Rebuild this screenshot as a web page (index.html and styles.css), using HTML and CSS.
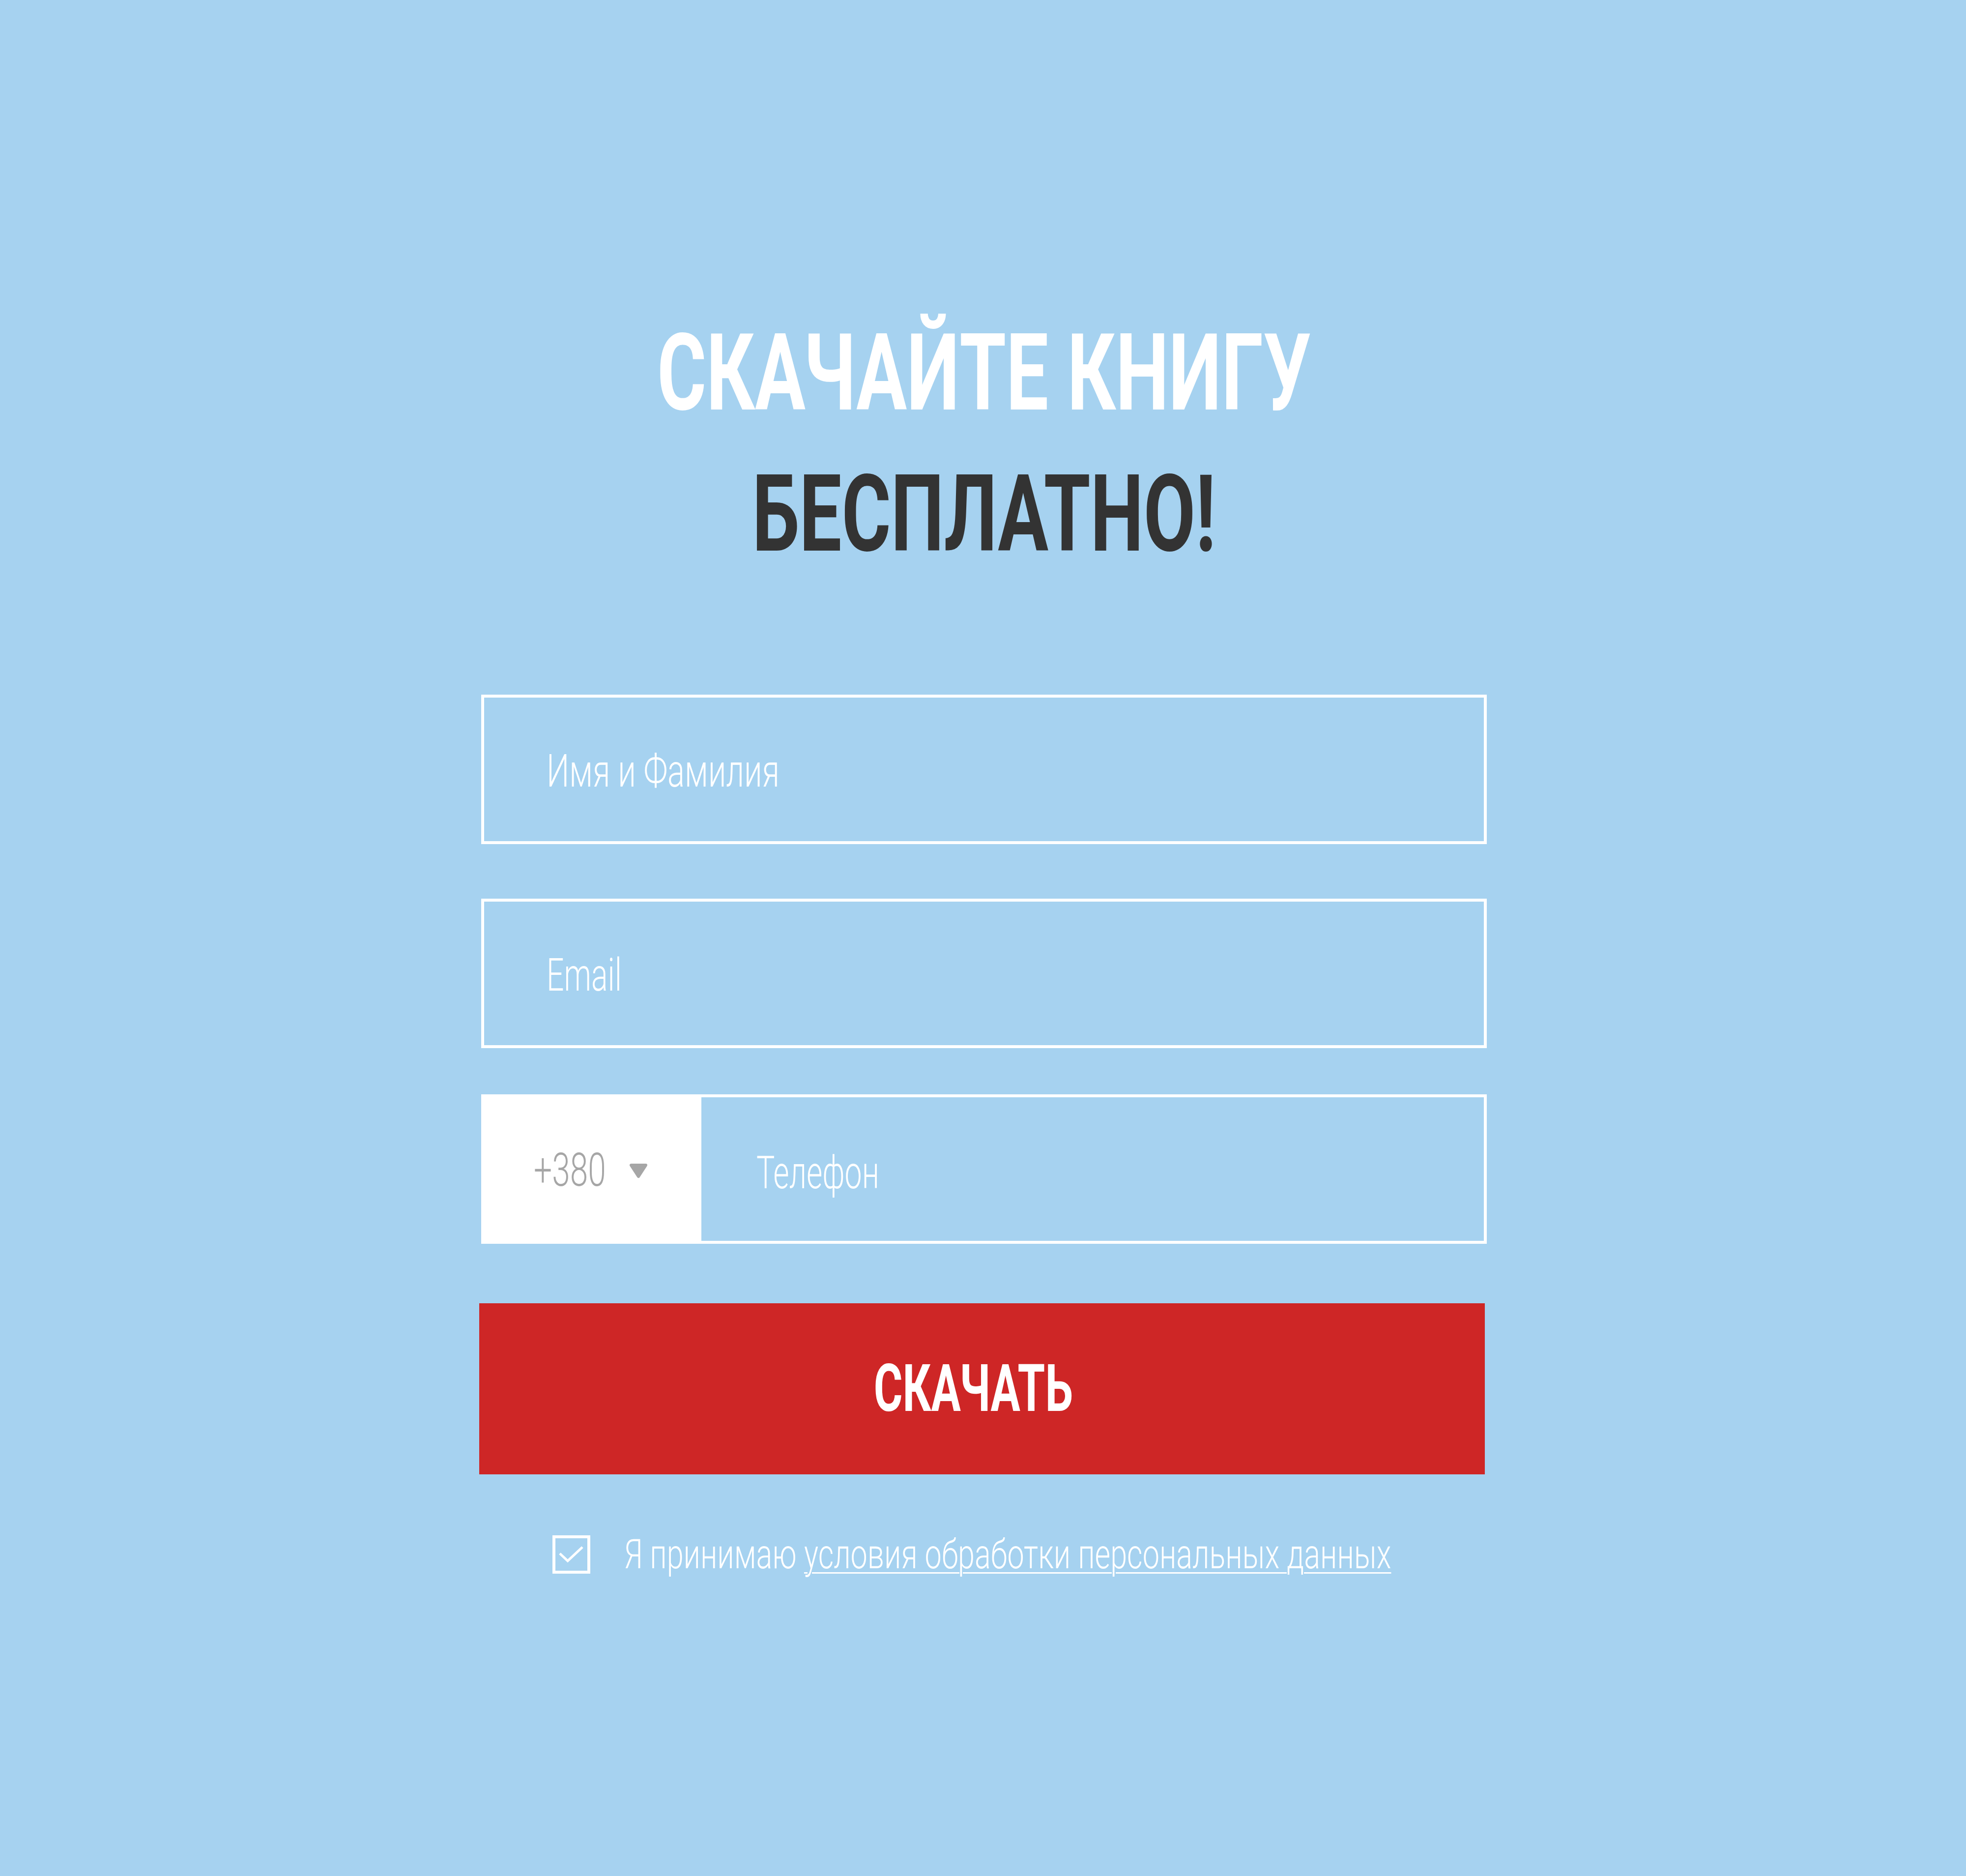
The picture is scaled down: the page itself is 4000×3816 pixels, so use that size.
FILE: index.html
```html
<!DOCTYPE html>
<html lang="ru">
<head>
<meta charset="utf-8">
<title>Скачайте книгу бесплатно</title>
<link rel="stylesheet" href="styles.css">
</head>
<body>
<main class="page">
  <h1 class="title">
    <span class="title-line title-white">СКАЧАЙТЕ КНИГУ</span>
    <span class="title-line title-dark">БЕСПЛАТНО!</span>
  </h1>
  <form class="form">
    <label class="field">
      <span class="ph ph-name">Имя и Фамилия</span>
    </label>
    <label class="field field-email">
      <span class="ph ph-email">Email</span>
    </label>
    <div class="phone-row">
      <div class="code">
        <span class="code-text">+380</span>
        <svg class="code-arrow" width="36" height="30" viewBox="0 0 36 30"><polygon points="3,3 33,3 18,26" fill="#a6a6a6" stroke="#a6a6a6" stroke-width="6" stroke-linejoin="round"/></svg>
      </div>
      <label class="field field-phone">
        <span class="ph ph-phone">Телефон</span>
      </label>
    </div>
    <button type="button" class="submit"><span class="submit-text">СКАЧАТЬ</span></button>
    <div class="consent">
      <svg class="check" width="78" height="78" viewBox="0 0 78 78"><rect x="3" y="3" width="71" height="72" fill="none" stroke="#fff" stroke-width="6"/><polyline points="15,37 31,52 61,24" fill="none" stroke="#fff" stroke-width="5"/></svg>
      <span class="consent-text">Я принимаю <u class="consent-link">условия обработки персональных данных</u></span>
    </div>
  </form>
</main>
</body>
</html>
```
FILE: styles.css
```css
html, body {
  margin: 0;
  padding: 0;
}
body {
  background: #a6d2f0;
  font-family: Roboto, "Liberation Sans", sans-serif;
  min-height: 3816px;
}
.page {
  width: 2046px;
  margin-left: calc(50% - 1021px);
  padding-top: 615px;
  box-sizing: border-box;
}
.title {
  margin: 0;
  text-align: center;
  font-size: 218px;
  line-height: 287px;
  font-weight: 700;
}
.title-line {
  display: block;
  transform: scaleX(0.702);
  transform-origin: center;
}
.title-white { color: #ffffff; }
.title-dark { color: #333333; }

.form {
  margin-top: 224px;
  display: flex;
  flex-direction: column;
}
.field {
  display: flex;
  align-items: center;
  height: 304px;
  box-sizing: border-box;
  border: 6px solid #ffffff;
  padding-left: 127px;
  padding-top: 8px;
}
.field-email {
  margin-top: 111px;
}
.ph {
  display: inline-block;
  color: #ffffff;
  font-weight: 300;
  font-size: 92px;
  line-height: 1;
  white-space: nowrap;
  transform-origin: left center;
  transform: scaleX(0.708);
}
.ph-email,
.ph-phone {
  transform: scaleX(0.68);
}
.phone-row {
  display: flex;
  margin-top: 94px;
  height: 304px;
}
.code {
  width: 448px;
  flex: none;
  background: #ffffff;
  display: flex;
  align-items: center;
  padding-left: 107px;
  padding-right: 110px;
  padding-top: 4px;
  box-sizing: border-box;
}
.code-text {
  flex: 1;
  min-width: 0;
  display: block;
  white-space: nowrap;
  color: #a6a6a6;
  font-weight: 300;
  font-size: 94px;
  line-height: 1;
  transform-origin: left center;
  transform: scaleX(0.7);
}
.code-arrow {
  flex: none;
  display: block;
  margin-top: 4px;
}
.field-phone {
  flex: 1;
  border-left: 0;
  padding-left: 112px;
  padding-top: 16px;
}
.submit {
  margin: 121px 4px 0 -4px;
  height: 348px;
  border: 0;
  background: #ce2626;
  color: #ffffff;
  font-family: Roboto, "Liberation Sans", sans-serif;
  font-weight: 700;
  font-size: 134px;
  line-height: 1;
  padding: 0 36px 0 0;
  cursor: pointer;
}
.submit-text {
  display: inline-block;
  transform: scaleX(0.67);
}
.consent {
  margin-top: 121px;
  display: flex;
  align-items: center;
  padding-left: 145px;
}
.check {
  display: block;
  flex: none;
}
.consent-text {
  display: inline-block;
  margin-left: 68px;
  color: #ffffff;
  font-weight: 300;
  font-size: 84px;
  line-height: 1;
  white-space: nowrap;
  transform-origin: left center;
  transform: scaleX(0.728);
}
.consent-link {
  text-decoration: underline;
  text-decoration-thickness: 3px;
  text-underline-offset: 8px;
}
```
